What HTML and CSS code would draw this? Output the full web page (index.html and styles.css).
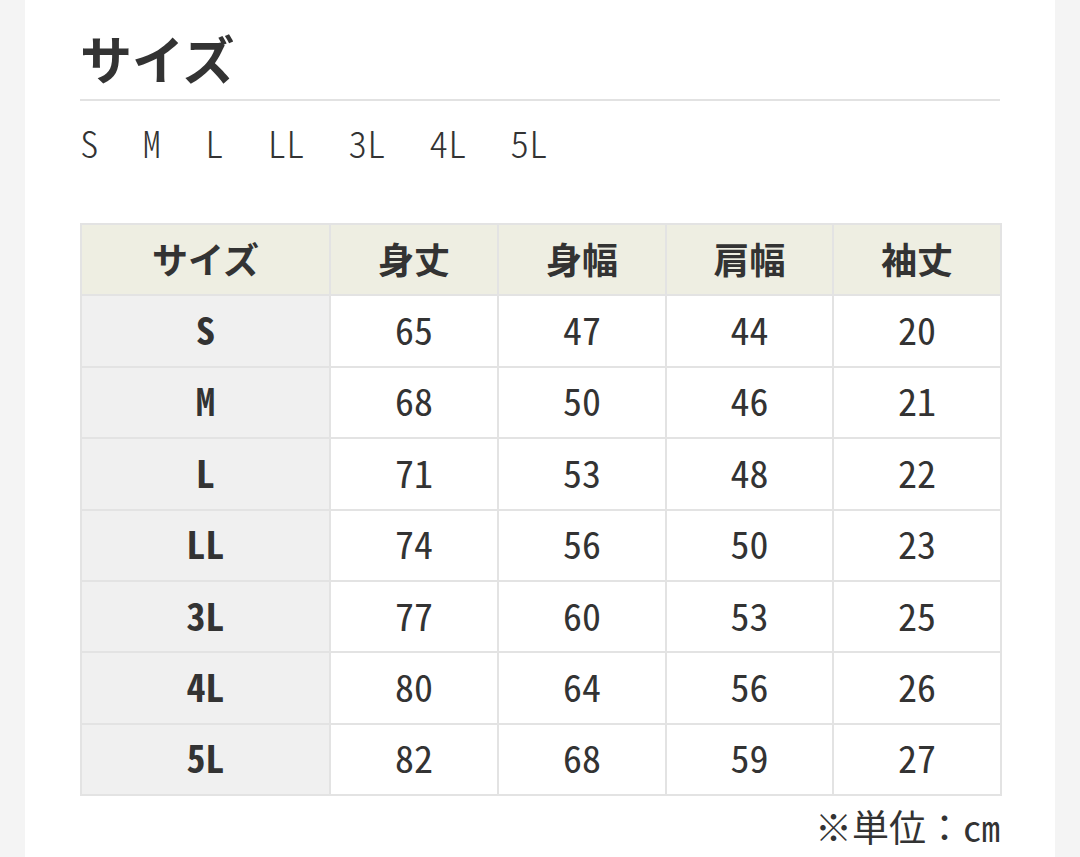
FILE: index.html
```html
<!DOCTYPE html>
<html lang="ja">
<head>
<meta charset="utf-8">
<link rel="stylesheet" href="styles.css">
</head>
<body>
<main class="page">
  <h1 class="title">サイズ</h1>
  <ul class="size-list">
    <li>S</li><li>M</li><li>L</li><li>LL</li><li>3L</li><li>4L</li><li>5L</li>
  </ul>
  <table class="size-table">
    <colgroup>
      <col class="c-first"><col class="c-w1"><col class="c-w1"><col class="c-w2"><col class="c-w1">
    </colgroup>
    <thead>
      <tr><th>サイズ</th><th>身丈</th><th>身幅</th><th>肩幅</th><th>袖丈</th></tr>
    </thead>
    <tbody>
      <tr><th>S</th><td>65</td><td>47</td><td>44</td><td>20</td></tr>
      <tr><th>M</th><td>68</td><td>50</td><td>46</td><td>21</td></tr>
      <tr><th>L</th><td>71</td><td>53</td><td>48</td><td>22</td></tr>
      <tr><th>LL</th><td>74</td><td>56</td><td>50</td><td>23</td></tr>
      <tr><th>3L</th><td>77</td><td>60</td><td>53</td><td>25</td></tr>
      <tr><th>4L</th><td>80</td><td>64</td><td>56</td><td>26</td></tr>
      <tr><th>5L</th><td>82</td><td>68</td><td>59</td><td>27</td></tr>
    </tbody>
  </table>
  <p class="unit">※単位：<span class="hw">cm</span></p>
</main>
</body>
</html>
```
FILE: styles.css
```css
html, body {
  margin: 0;
  padding: 0;
}
body {
  background: #f4f4f4;
  font-family: "Noto Sans CJK JP", "Noto Sans", sans-serif;
  font-feature-settings: "hwid" 1;
  color: #333;
}
.page {
  box-sizing: border-box;
  margin: 0 25px;
  min-height: 857px;
  background: #fff;
  padding: 26px 55px 0 55px;
}
.title {
  margin: 0;
  font-size: 52px;
  font-weight: 700;
  line-height: 64px;
  padding-bottom: 9px;
  border-bottom: 2px solid #e2e2e2;
  color: #333;
}
.size-list {
  list-style: none;
  margin: 0;
  padding: 0;
  display: flex;
  gap: 44px;
  font-size: 37px;
  font-weight: 300;
  line-height: 50px;
  margin-top: 16px;
  margin-bottom: 56px;
}
.size-table {
  width: 920px;
  border-collapse: collapse;
  table-layout: fixed;
  border: 2px solid #e3e3e3;
}
.c-first { width: 249px; }
.c-w1 { width: 168px; }
.c-w2 { width: 167px; }
.size-table th,
.size-table td {
  border: 2px solid #e3e3e3;
  text-align: center;
  vertical-align: middle;
  height: 71.4px;
  padding: 0 0 4px;
  box-sizing: border-box;
  line-height: 40px;
}
.size-table thead th {
  background: #eeeee2;
  font-size: 36px;
  font-weight: 700;
}
.size-table tbody th {
  background: #f0f0f0;
  font-size: 38px;
  font-weight: 700;
}
.size-table td {
  font-size: 38px;
  font-weight: 400;
  background: #fff;
}
.unit {
  margin: 6px 0 0;
  text-align: right;
  font-size: 37px;
  line-height: 48px;
  font-feature-settings: normal;
}
.unit .hw {
  font-feature-settings: "hwid" 1;
}
```
